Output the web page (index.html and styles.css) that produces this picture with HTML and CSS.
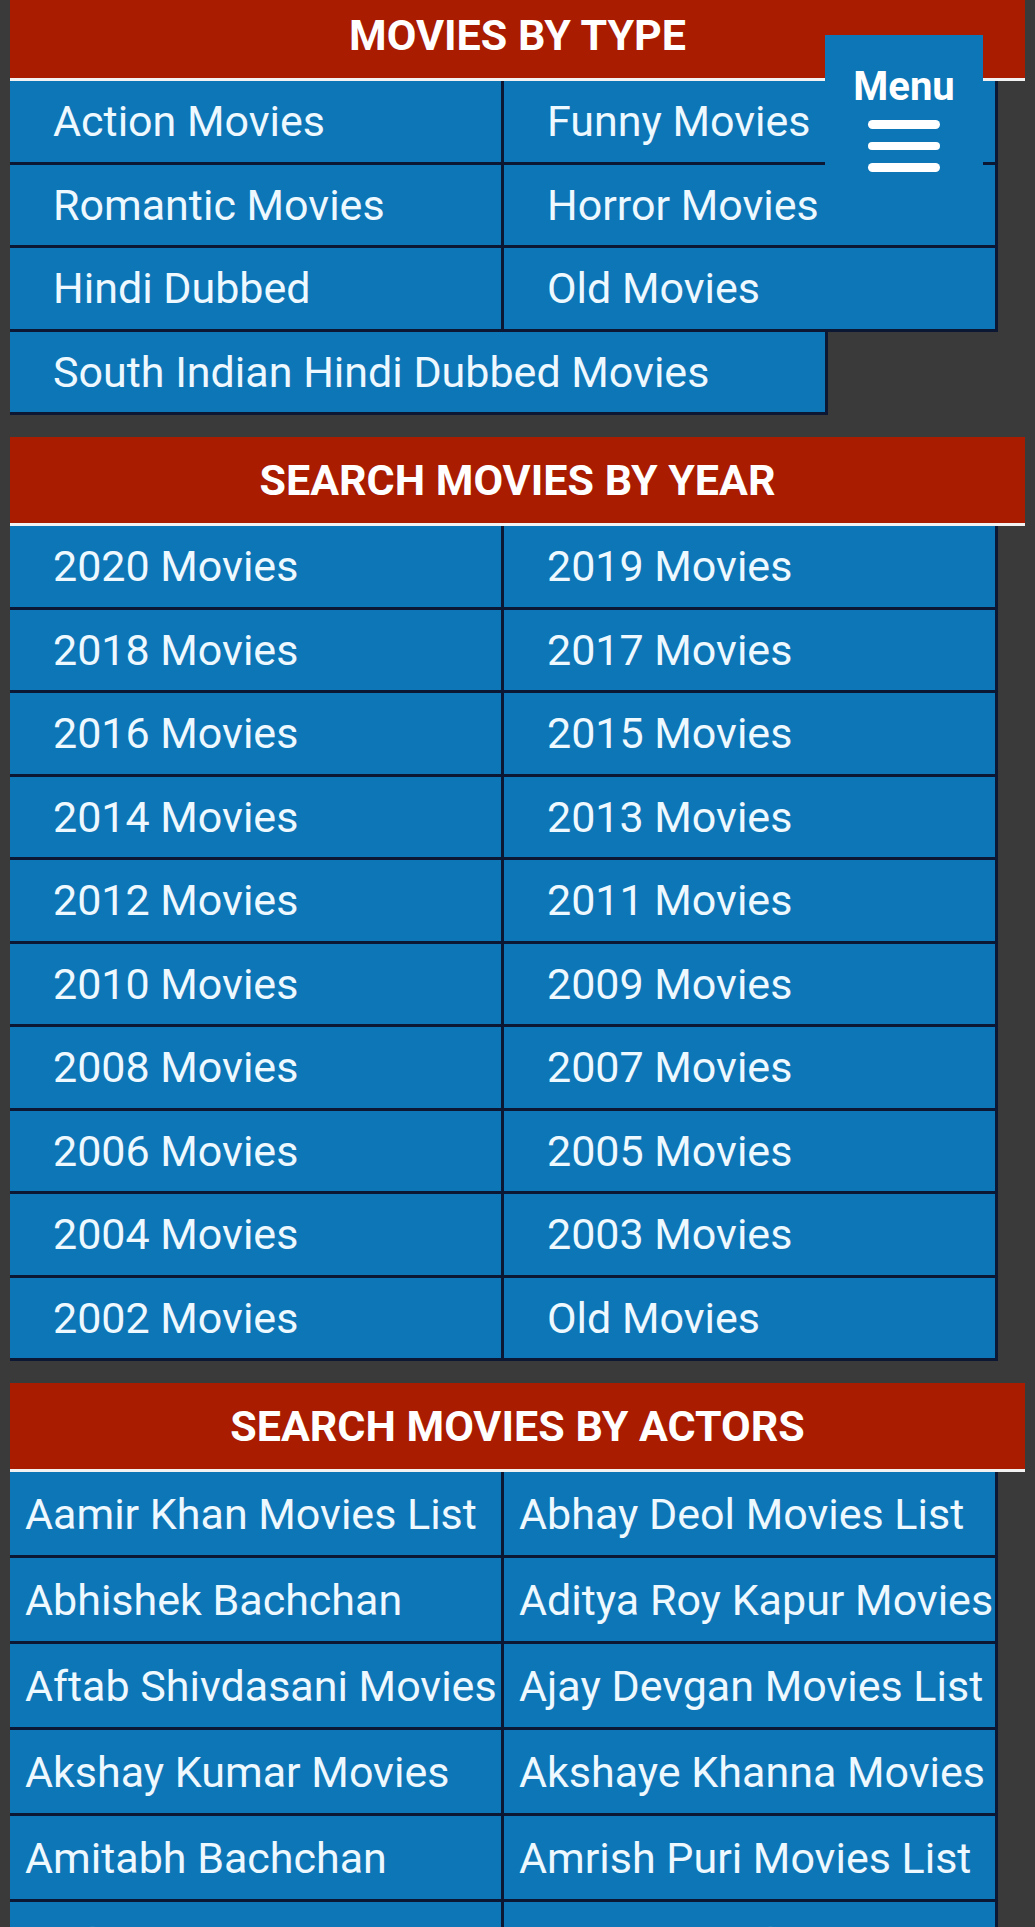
FILE: index.html
```html
<!DOCTYPE html>
<html lang="en">
<head>
  <meta charset="UTF-8">
  <meta name="viewport" content="width=device-width, initial-scale=1.0">
  <title>Movies</title>
  <link rel="stylesheet" href="styles.css">
</head>
<body>
  <div class="page">
    <section class="block">
      <h2 class="block-title">MOVIES BY TYPE</h2>
      <ul class="links">
        <li><a href="#">Action Movies</a></li>
        <li><a href="#">Funny Movies</a></li>
        <li><a href="#">Romantic Movies</a></li>
        <li><a href="#">Horror Movies</a></li>
        <li><a href="#">Hindi Dubbed</a></li>
        <li><a href="#">Old Movies</a></li>
        <li class="wide"><a href="#">South Indian Hindi Dubbed Movies</a></li>
      </ul>
    </section>

    <section class="block">
      <h2 class="block-title">SEARCH MOVIES BY YEAR</h2>
      <ul class="links">
        <li><a href="#">2020 Movies</a></li>
        <li><a href="#">2019 Movies</a></li>
        <li><a href="#">2018 Movies</a></li>
        <li><a href="#">2017 Movies</a></li>
        <li><a href="#">2016 Movies</a></li>
        <li><a href="#">2015 Movies</a></li>
        <li><a href="#">2014 Movies</a></li>
        <li><a href="#">2013 Movies</a></li>
        <li><a href="#">2012 Movies</a></li>
        <li><a href="#">2011 Movies</a></li>
        <li><a href="#">2010 Movies</a></li>
        <li><a href="#">2009 Movies</a></li>
        <li><a href="#">2008 Movies</a></li>
        <li><a href="#">2007 Movies</a></li>
        <li><a href="#">2006 Movies</a></li>
        <li><a href="#">2005 Movies</a></li>
        <li><a href="#">2004 Movies</a></li>
        <li><a href="#">2003 Movies</a></li>
        <li><a href="#">2002 Movies</a></li>
        <li><a href="#">Old Movies</a></li>
      </ul>
    </section>

    <section class="block">
      <h2 class="block-title">SEARCH MOVIES BY ACTORS</h2>
      <ul class="links actors">
        <li><a href="#">Aamir Khan Movies List</a></li>
        <li><a href="#">Abhay Deol Movies List</a></li>
        <li><a href="#">Abhishek Bachchan</a></li>
        <li><a href="#">Aditya Roy Kapur Movies</a></li>
        <li><a href="#">Aftab Shivdasani Movies</a></li>
        <li><a href="#">Ajay Devgan Movies List</a></li>
        <li><a href="#">Akshay Kumar Movies</a></li>
        <li><a href="#">Akshaye Khanna Movies</a></li>
        <li><a href="#">Amitabh Bachchan</a></li>
        <li><a href="#">Amrish Puri Movies List</a></li>
        <li><a href="#">Anil Kapoor Movies List</a></li>
        <li><a href="#">Arjun Rampal Movies List</a></li>
      </ul>
    </section>
  </div>

  <button class="menu-btn" type="button">
    <span class="menu-label">Menu</span>
    <span class="bar"></span>
    <span class="bar"></span>
    <span class="bar"></span>
  </button>
</body>
</html>
```

FILE: styles.css
```css
body {
  margin: 0;
  background-color: #3a3a3a;
  font-family: Roboto, "Noto Sans", Arial, sans-serif;
}

.page {
  margin-top: -8px;
  padding: 0 10px;
}

.block {
  margin-bottom: 22px;
}

.block-title {
  margin: 0;
  height: 86px;
  display: flex;
  align-items: center;
  justify-content: center;
  background-color: #aa1c00;
  border-bottom: 3px solid #f2f2f2;
  color: #fff;
  font-size: 43px;
  font-weight: 700;
}

.links {
  list-style: none;
  margin: 0;
  padding: 0;
  display: grid;
  grid-template-columns: 494px 494px;
}

.links li {
  box-sizing: border-box;
  height: 83.5px;
  display: flex;
  align-items: center;
  padding-left: 43px;
  background-color: #0d76b7;
  border-right: 3px solid #0b1733;
  border-bottom: 3px solid #0b1733;
  white-space: nowrap;
  overflow: hidden;
}

.links a {
  color: #eef8ff;
  text-decoration: none;
  font-size: 43px;
}

.links .wide {
  grid-column: 1 / span 2;
  width: 818px;
}

.actors li {
  height: 86px;
  padding-left: 15px;
}

.menu-btn {
  position: fixed;
  top: 35px;
  left: 825px;
  width: 158px;
  height: 150px;
  padding: 28px 0 0;
  display: flex;
  flex-direction: column;
  align-items: center;
  background-color: #0d76b7;
  border: none;
  color: #fff;
  font-family: Roboto, "Noto Sans", Arial, sans-serif;
  cursor: pointer;
}

.menu-label {
  font-size: 40px;
  font-weight: 700;
  line-height: 47px;
  margin-bottom: 10px;
}

.bar {
  width: 72px;
  height: 10px;
  border-radius: 5px;
  background-color: #fff;
  margin-bottom: 13px;
}
```
